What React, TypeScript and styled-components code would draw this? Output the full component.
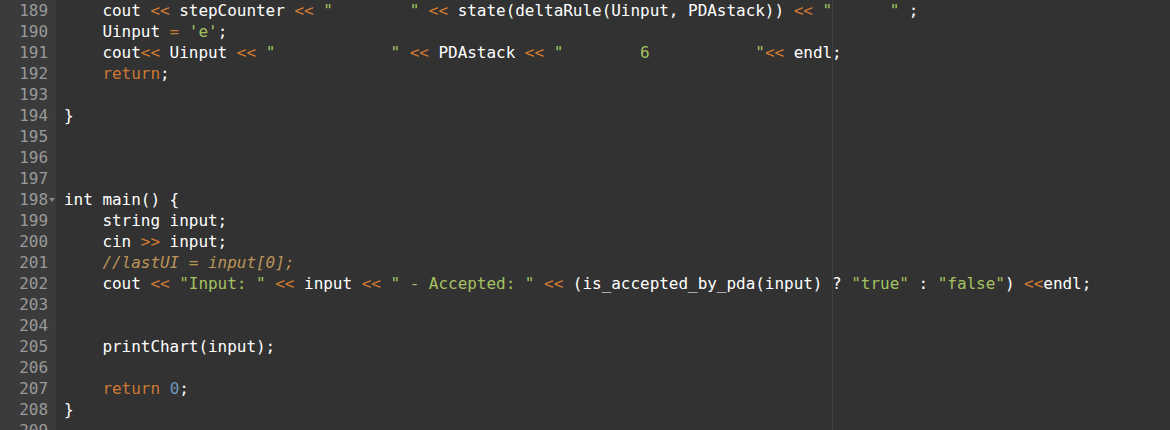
import React from "react";
import styled, { createGlobalStyle } from "styled-components";

const GlobalStyle = createGlobalStyle`
  html, body {
    margin: 0;
    padding: 0;
    background: #323232;
  }
  #root {
    width: 1170px;
    height: 430px;
  }
`;

type Kind = "p" | "k" | "s" | "n" | "c";
type Tok = [Kind, string];

const colors: Record<Kind, string> = {
  p: "#ffffff",
  k: "#cc7833",
  s: "#a5c261",
  n: "#6c99bb",
  c: "#bc9458",
};

const Editor = styled.div`
  position: relative;
  display: flex;
  width: 1170px;
  height: 430px;
  overflow: hidden;
  background: #323232;
  font-family: "DejaVu Sans Mono", "Liberation Mono", monospace;
  font-size: 16px;
  letter-spacing: -0.033px;
  line-height: 21px;
`;

const Gutter = styled.div`
  flex: 0 0 56px;
  display: flex;
  flex-direction: column;
  background: #3b3b3b;
  color: #999999;
`;

const GutterCell = styled.div`
  position: relative;
  height: 21px;
  padding-right: 8px;
  text-align: right;
  white-space: pre;
`;

const FoldWidget = styled.span`
  position: absolute;
  right: 1px;
  top: 9px;
  width: 0;
  height: 0;
  border-left: 3px solid transparent;
  border-right: 3px solid transparent;
  border-top: 4px solid #8a8a8a;
`;

const Content = styled.div`
  flex: 1 1 auto;
  display: flex;
  flex-direction: column;
  padding-left: 8px;
`;

const CodeLine = styled.div`
  height: 21px;
  white-space: pre;
  color: #ffffff;
`;

const Token = styled.span<{ $kind: Kind }>`
  color: ${(p) => colors[p.$kind]};
  font-style: ${(p) => (p.$kind === "c" ? "italic" : "normal")};
`;

const PrintMargin = styled.div`
  position: absolute;
  top: 0;
  bottom: 0;
  left: 832px;
  width: 1px;
  background: #3e3e3e;
`;

const ind = "    ";

const lines: Tok[][] = [
  [
    ["p", ind + "cout "],
    ["k", "<<"],
    ["p", " stepCounter "],
    ["k", "<<"],
    ["p", " "],
    ["s", '"        "'],
    ["p", " "],
    ["k", "<<"],
    ["p", " state(deltaRule(Uinput, PDAstack)) "],
    ["k", "<<"],
    ["p", " "],
    ["s", '"      "'],
    ["p", " ;"],
  ],
  [
    ["p", ind + "Uinput "],
    ["k", "="],
    ["p", " "],
    ["s", "'e'"],
    ["p", ";"],
  ],
  [
    ["p", ind + "cout"],
    ["k", "<<"],
    ["p", " Uinput "],
    ["k", "<<"],
    ["p", " "],
    ["s", '"            "'],
    ["p", " "],
    ["k", "<<"],
    ["p", " PDAstack "],
    ["k", "<<"],
    ["p", " "],
    ["s", '"        6           "'],
    ["k", "<<"],
    ["p", " endl;"],
  ],
  [
    ["p", ind],
    ["k", "return"],
    ["p", ";"],
  ],
  [],
  [["p", "}"]],
  [],
  [],
  [],
  [["p", "int main() {"]],
  [["p", ind + "string input;"]],
  [
    ["p", ind + "cin "],
    ["k", ">>"],
    ["p", " input;"],
  ],
  [
    ["p", ind],
    ["c", "//lastUI = input[0];"],
  ],
  [
    ["p", ind + "cout "],
    ["k", "<<"],
    ["p", " "],
    ["s", '"Input: "'],
    ["p", " "],
    ["k", "<<"],
    ["p", " input "],
    ["k", "<<"],
    ["p", " "],
    ["s", '" - Accepted: "'],
    ["p", " "],
    ["k", "<<"],
    ["p", " (is_accepted_by_pda(input) ? "],
    ["s", '"true"'],
    ["p", " : "],
    ["s", '"false"'],
    ["p", ") "],
    ["k", "<<"],
    ["p", "endl;"],
  ],
  [],
  [],
  [["p", ind + "printChart(input);"]],
  [],
  [
    ["p", ind],
    ["k", "return"],
    ["p", " "],
    ["n", "0"],
    ["p", ";"],
  ],
  [["p", "}"]],
  [],
];

const FIRST = 189;

export default function App() {
  return (
    <>
      <GlobalStyle />
      <Editor>
        <Gutter>
          {lines.map((_, i) => (
            <GutterCell key={i}>
              {FIRST + i}
              {FIRST + i === 198 && <FoldWidget />}
            </GutterCell>
          ))}
        </Gutter>
        <Content>
          {lines.map((toks, i) => (
            <CodeLine key={i}>
              {toks.length === 0
                ? " "
                : toks.map(([k, t], j) => (
                    <Token key={j} $kind={k}>
                      {t}
                    </Token>
                  ))}
            </CodeLine>
          ))}
        </Content>
        <PrintMargin />
      </Editor>
    </>
  );
}
